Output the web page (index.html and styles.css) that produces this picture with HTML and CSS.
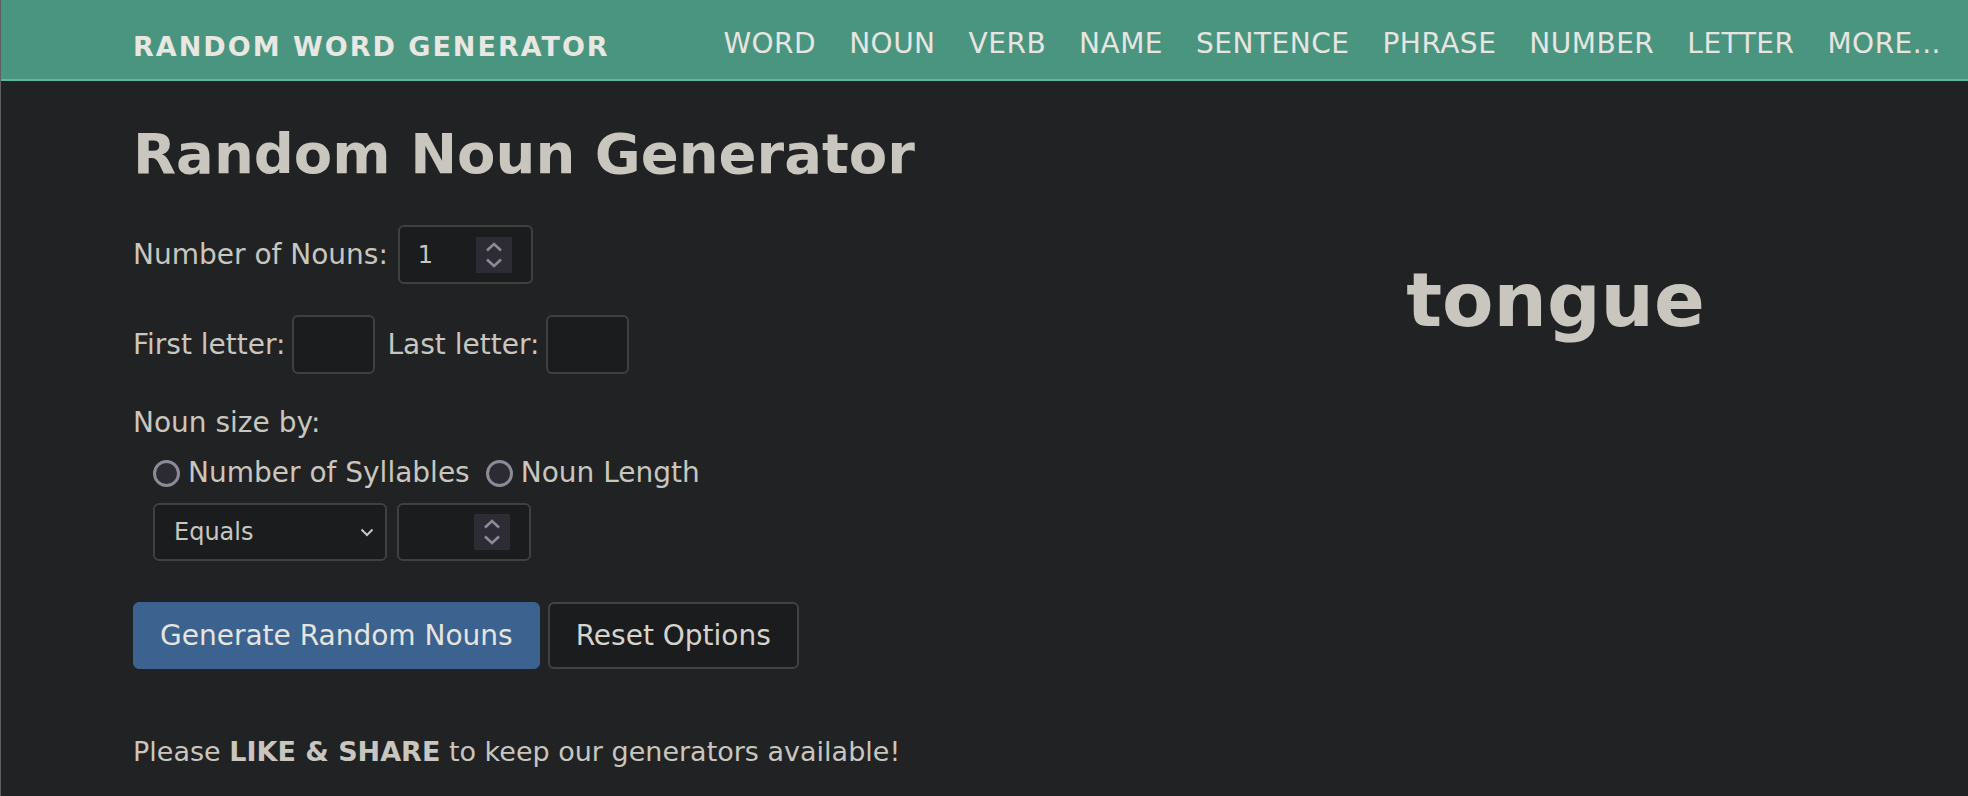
FILE: index.html
```html
<!DOCTYPE html>
<html lang="en">
<head>
<meta charset="utf-8">
<title>Random Noun Generator</title>
<link rel="stylesheet" href="styles.css">
</head>
<body>
<div class="page">
  <header class="topbar">
    <div class="brand">RANDOM WORD GENERATOR</div>
    <nav class="nav">
      <a>WORD</a><a>NOUN</a><a>VERB</a><a>NAME</a><a>SENTENCE</a><a>PHRASE</a><a>NUMBER</a><a>LETTER</a><a>MORE...</a>
    </nav>
  </header>
  <main class="main">
    <section class="form-col">
      <h1 class="title">Random Noun Generator</h1>
      <div class="row row-count">
        <span class="lbl lbl-count">Number of Nouns:</span>
        <div class="field field-num">
          <span class="val">1</span>
          <svg class="spin" width="36" height="36" viewBox="0 0 36 36"><rect width="36" height="36" fill="#2d2c35"/><polyline points="11,13.5 18,7 25,13.5" fill="none" stroke="#8d899a" stroke-width="2.6"/><polyline points="11,22.5 18,29 25,22.5" fill="none" stroke="#8d899a" stroke-width="2.6"/></svg>
        </div>
      </div>
      <div class="row row-letters">
        <span class="lbl">First letter:</span>
        <div class="field field-letter"></div>
        <span class="lbl lbl-gap">Last letter:</span>
        <div class="field field-letter"></div>
      </div>
      <div class="size-label">Noun size by:</div>
      <div class="radios">
        <span class="radio"></span><span class="radio-text">Number of Syllables</span>
        <span class="radio radio-gap"></span><span class="radio-text">Noun Length</span>
      </div>
      <div class="size-controls">
        <div class="field field-select">
          <span class="sel-val">Equals</span>
          <svg class="chev" width="14" height="9" viewBox="0 0 14 9"><polyline points="1.5,1.5 7,7 12.5,1.5" fill="none" stroke="#c8c6bf" stroke-width="2"/></svg>
        </div>
        <div class="field field-num field-num2">
          <span class="val"></span>
          <svg class="spin" width="36" height="36" viewBox="0 0 36 36"><rect width="36" height="36" fill="#2d2c35"/><polyline points="11,13.5 18,7 25,13.5" fill="none" stroke="#8d899a" stroke-width="2.6"/><polyline points="11,22.5 18,29 25,22.5" fill="none" stroke="#8d899a" stroke-width="2.6"/></svg>
        </div>
      </div>
      <div class="actions">
        <button class="btn btn-primary">Generate Random Nouns</button>
        <button class="btn btn-dark">Reset Options</button>
      </div>
      <p class="share">Please <strong>LIKE &amp; SHARE</strong> to keep our generators available!</p>
    </section>
    <section class="result-col">
      <div class="word">tongue</div>
    </section>
  </main>
</div>
</body>
</html>
```
FILE: styles.css
```css
html, body {
  margin: 0;
  padding: 0;
  background: #212224;
}
body {
  font-family: "DejaVu Sans", "Liberation Sans", sans-serif;
  color: #c8c6bf;
  height: 796px;
  overflow: hidden;
}
.page {
  border-left: 1px solid rgba(255, 255, 255, 0.28);
  min-height: 796px;
}
.topbar {
  height: 79px;
  background: #4a9580;
  border-bottom: 2px solid #5db79b;
  display: flex;
  align-items: flex-start;
  padding: 0 27px 0 132px;
}
.brand {
  font-weight: bold;
  font-size: 27px;
  letter-spacing: 2px;
  line-height: 40px;
  margin-top: 27px;
  color: #e9e7e2;
}
.nav {
  margin-left: auto;
  margin-top: 24px;
  display: flex;
  gap: 33px;
}
.nav a {
  font-size: 28px;
  letter-spacing: 0.5px;
  line-height: 40px;
  color: #e7e5e0;
}
.main {
  display: grid;
  grid-template-columns: 1037px 771px;
  padding: 39px 0 0 132px;
}
.title {
  margin: 0;
  font-size: 56px;
  line-height: 68px;
  font-weight: bold;
  color: #c8c6bf;
}
.row {
  display: flex;
  align-items: center;
  height: 59px;
}
.row-count { margin-top: 37px; }
.row-letters { margin-top: 31px; }
.lbl {
  font-size: 28px;
  line-height: 42px;
  margin-right: 7px;
}
.lbl-count { margin-right: 10px; }
.lbl-gap { margin-left: 12px; }
.field {
  box-sizing: border-box;
  background: #1b1c1e;
  border: 2px solid #3d4240;
  border-radius: 6px;
  display: flex;
  align-items: center;
}
.field-num {
  width: 135px;
  height: 59px;
  padding: 0 19px 0 18px;
  justify-content: space-between;
}
.field-num .val {
  font-size: 24px;
  color: #c8c6bf;
}
.field-letter {
  width: 83px;
  height: 59px;
}
.size-label {
  margin-top: 28px;
  font-size: 28px;
  line-height: 42px;
}
.radios {
  margin-top: 8px;
  margin-left: 20px;
  display: flex;
  align-items: center;
  font-size: 28px;
  line-height: 42px;
}
.radio {
  box-sizing: border-box;
  width: 27px;
  height: 27px;
  border-radius: 50%;
  border: 3px solid #8d8a98;
  background: #2c2b33;
  margin-right: 8px;
}
.radio-gap { margin-left: 16px; }
.size-controls {
  margin-top: 9px;
  margin-left: 20px;
  display: flex;
  gap: 10px;
}
.field-select {
  width: 234px;
  height: 58px;
  padding: 0 11px 0 19px;
  justify-content: space-between;
  font-size: 24px;
}
.field-num2 {
  width: 134px;
  height: 58px;
}
.actions {
  margin-top: 41px;
  display: flex;
  gap: 8px;
}
.btn {
  font-family: "DejaVu Sans", "Liberation Sans", sans-serif;
  font-size: 28px;
  height: 67px;
  padding: 0 26px;
  border-radius: 6px;
  color: #e6e4df;
}
.btn-primary {
  background: #3c6290;
  border: 1px solid #3c6290;
}
.btn-dark {
  background: #1b1c1e;
  border: 2px solid #3e4442;
  color: #d6d3cc;
}
.share {
  margin: 62px 0 0;
  font-size: 27px;
  line-height: 42px;
}
.share strong {
  font-weight: bold;
}
.result-col {
  padding-top: 135px;
  text-align: center;
}
.word {
  font-size: 75px;
  line-height: 90px;
  font-weight: bold;
  color: #c8c6bf;
}
```
